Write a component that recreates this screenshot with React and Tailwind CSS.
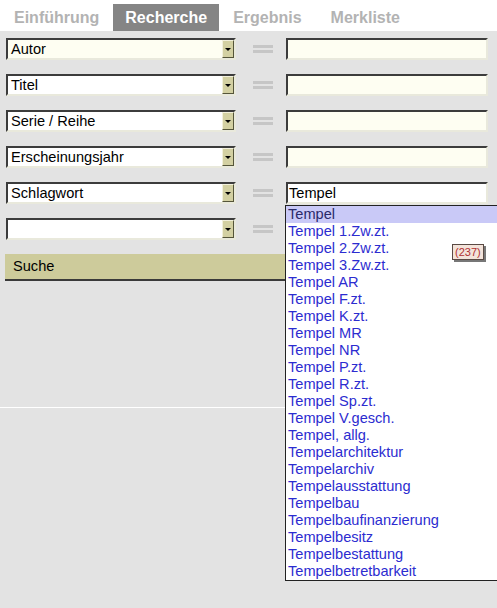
import React from 'react';

const fields = ['Autor', 'Titel', 'Serie / Reihe', 'Erscheinungsjahr', 'Schlagwort', '']
const values = ['', '', '', '', 'Tempel', '']

const suggestions = [
  'Tempel', 'Tempel 1.Zw.zt.', 'Tempel 2.Zw.zt.', 'Tempel 3.Zw.zt.', 'Tempel AR', 'Tempel F.zt.',
  'Tempel K.zt.', 'Tempel MR', 'Tempel NR', 'Tempel P.zt.', 'Tempel R.zt.', 'Tempel Sp.zt.',
  'Tempel V.gesch.', 'Tempel, allg.', 'Tempelarchitektur', 'Tempelarchiv', 'Tempelausstattung',
  'Tempelbau', 'Tempelbaufinanzierung', 'Tempelbesitz', 'Tempelbestattung', 'Tempelbetretbarkeit'
]

const tabs = ['Einführung', 'Recherche', 'Ergebnis', 'Merkliste']

const SelectBox = ({ label, cream }) => (
  <div className={`relative w-[230px] h-[22px] border-2 border-t-[#3c3c3c] border-l-[#3c3c3c] border-b-[#e9e9dc] border-r-[#e9e9dc] flex items-center ${cream ? 'bg-[#fefef2]' : 'bg-white'}`}>
    <span className="pl-[3px] text-[14.6px] text-black leading-none">{label}</span>
    <div className="absolute right-0 top-0 w-[12px] h-[18px] bg-[#d3d0a2] border border-t-[#f2f0dc] border-l-[#f2f0dc] border-b-[#55553a] border-r-[#55553a] flex items-center justify-center">
      <div className="w-0 h-0 border-l-[3px] border-r-[3px] border-t-[3px] border-l-transparent border-r-transparent border-t-black" />
    </div>
  </div>
)

export default function App() {
  return (
    <div className="w-[497px] h-[608px] bg-[#e3e3e3] overflow-hidden" style={{ fontFamily: '"Liberation Sans", Arial, sans-serif' }}>
      {/* Tabs */}
      <div className="h-[31px] bg-white flex items-end pl-[2px]">
        {tabs.map((t, i) => (
          <div
            key={t}
            className={`h-[27px] flex items-center px-[12px] mr-[2px] text-[16px] font-bold ${i === 1 ? 'bg-[#858585] text-white' : 'text-[#b3b3b3]'} ${i === 3 ? 'ml-[3px]' : ''}`}
          >
            {t}
          </div>
        ))}
      </div>

      {/* Form */}
      <div className="relative h-[577px]">
        <div className="pt-[7px] pl-[6px] flex flex-col gap-[14px]">
          {fields.map((f, i) => (
            <div key={i} className="flex items-center h-[22px]">
              <SelectBox label={f} cream={i === 0} />
              <div className="w-[20px] ml-[17px] mr-[13px] flex flex-col gap-[2px]">
                <div className="h-[3px] bg-[#c6c6c6]" />
                <div className="h-[3px] bg-[#c6c6c6]" />
              </div>
              {i < 5 && (
                <div className={`w-[202px] h-[22px] border-2 border-t-[#3c3c3c] border-l-[#3c3c3c] border-b-[#e9e9dc] border-r-[#e9e9dc] flex items-center ${i === 4 ? 'bg-white' : 'bg-[#fefef2]'}`}>
                  <span className="pl-[1px] text-[14.6px] text-black leading-none">{values[i]}</span>
                </div>
              )}
            </div>
          ))}
        </div>

        <div className="mt-[14px] ml-[5px] w-[290px] h-[27px] bg-[#cdcb9b] border-b-2 border-[#3a3a3a] flex items-center pl-[8px]">
          <span className="text-[14.6px] text-black">Suche</span>
        </div>

        <div className="mt-[126px] h-px bg-white" />

        {/* Autocomplete list */}
        <div className="absolute left-[285px] top-[174px] w-[212px] bg-white border border-[#222] border-r-0">
          {suggestions.map((s, i) => (
            <div key={s} className={`h-[17px] flex items-center pl-[2px] text-[14.6px] leading-none ${i === 0 ? 'bg-[#c9c9f7] text-[#2a2a6a]' : 'text-[#2c2cd0]'}`}>
              {s}
            </div>
          ))}
        </div>

        {/* Count badge */}
        <div className="absolute left-[452px] top-[213px] h-[16px] px-[2px] bg-[#f3e3da] border border-[#5a4a44] shadow-[2px_2px_0_#777] flex items-center text-[11px] text-[#b03030] leading-none">
          (237)
        </div>
      </div>
    </div>
  )
}
